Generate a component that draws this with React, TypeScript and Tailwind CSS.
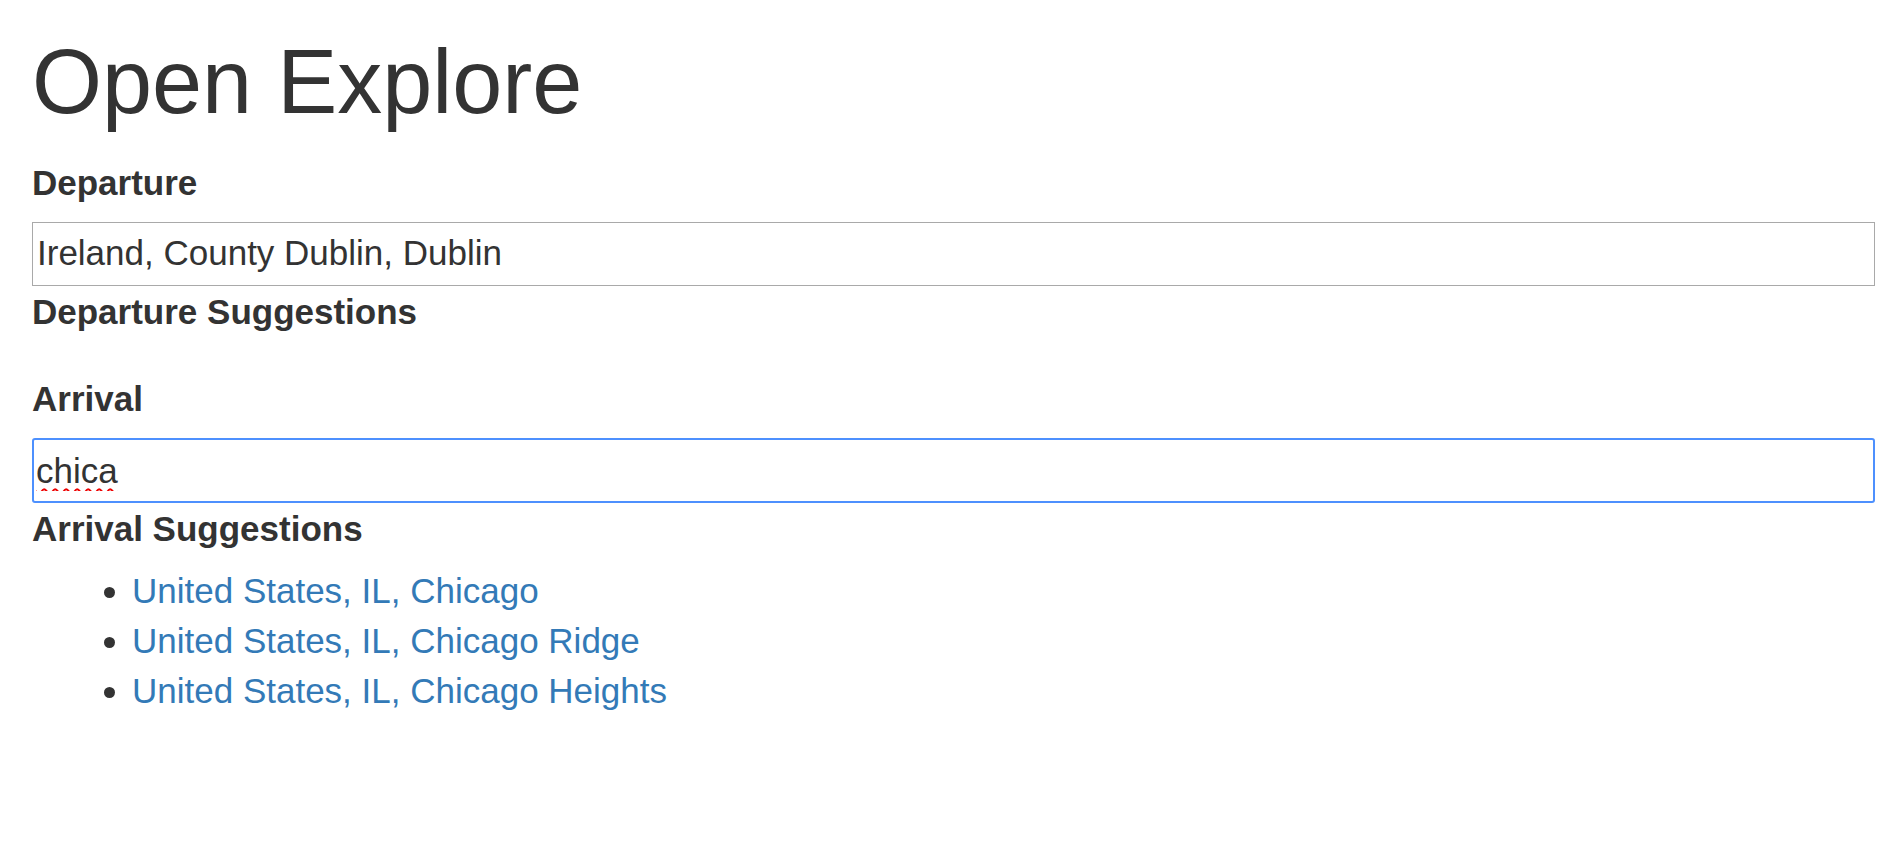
import React from 'react';

const arrivalSuggestions = [
  'United States, IL, Chicago',
  'United States, IL, Chicago Ridge',
  'United States, IL, Chicago Heights',
];

export default function App() {
  return (
    <div className="min-h-screen bg-white pl-[32px] pr-[18px] font-['Liberation_Sans',Arial,sans-serif] text-[35px] leading-[50px] text-[#333]">
      <h1 className="pt-[33px] text-[90px] leading-[99px] font-normal">Open Explore</h1>

      {/* Departure */}
      <label className="mt-[26px] block font-bold">Departure</label>
      <input
        type="text"
        readOnly
        value="Ireland, County Dublin, Dublin"
        className="mt-[14px] block h-[64px] w-full border border-[#a9a9a9] bg-white pb-[2px] pl-[4px] text-[#333] outline-none"
      />
      <div className="pt-[1px] font-bold">Departure Suggestions</div>

      {/* Arrival */}
      <label className="mt-[37px] block font-bold">Arrival</label>
      <input
        type="text"
        readOnly
        value="chica"
        className="mt-[14px] block h-[65px] w-full rounded-[3px] border-2 border-[#4d90fe] bg-white pl-[2px] text-[#333] underline decoration-[#e00] decoration-wavy decoration-[2px] underline-offset-[5px] outline-none"
      />
      <div className="pt-[1px] font-bold">Arrival Suggestions</div>
      <ul className="mt-[12px] list-disc pl-[100px]">
        {arrivalSuggestions.map((s) => (
          <li key={s}>
            <a href="#" className="text-[#337ab7] no-underline">
              {s}
            </a>
          </li>
        ))}
      </ul>
    </div>
  );
}
